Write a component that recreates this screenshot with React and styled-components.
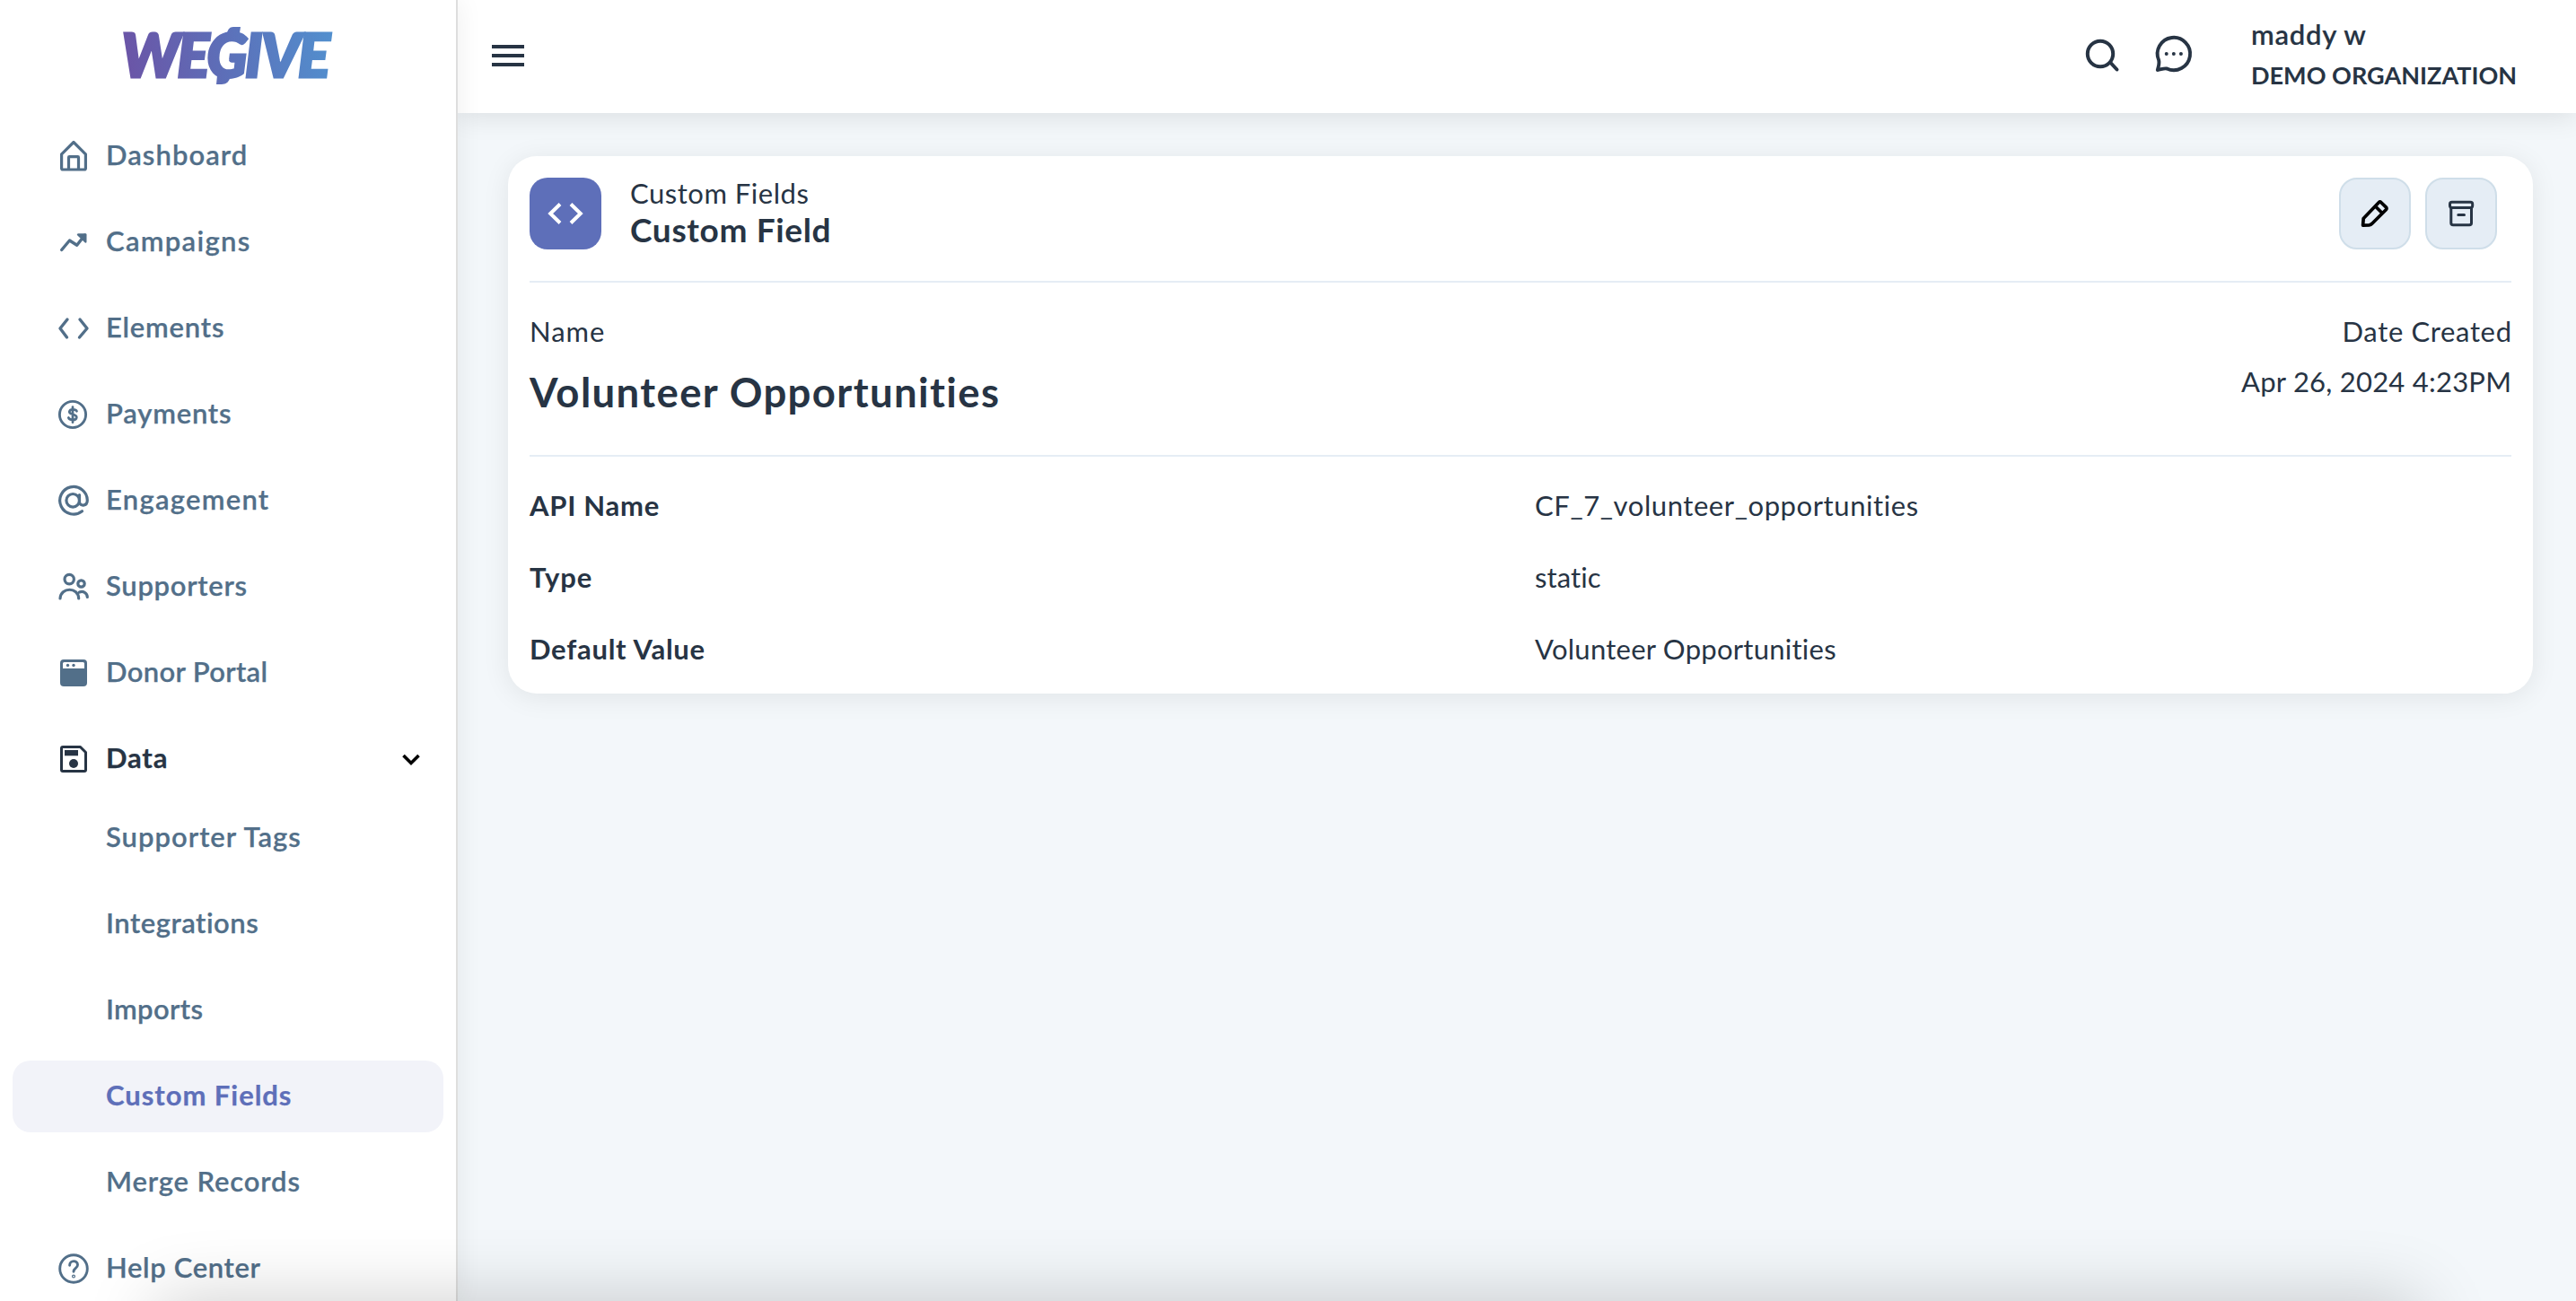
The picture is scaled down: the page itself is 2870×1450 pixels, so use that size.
import React from "react";
import styled, { createGlobalStyle } from "styled-components";

const ink = "#273444";
const slate = "#526f89";
const indigo = "#5e6fb9";
const line = "#e5edf5";

const GlobalStyle = createGlobalStyle`
  * { box-sizing: border-box; }
  body {
    margin: 0;
    font-family: Lato, "Open Sans", sans-serif;
    font-variant-ligatures: none;
    color: ${ink};
  }
`;

const Page = styled.div`
  position: relative;
  display: flex;
  width: 2870px;
  height: 1450px;
  overflow: hidden;
  background: #f3f7fa;
`;

const BottomShade = styled.div`
  position: absolute;
  left: 175px;
  right: 175px;
  top: 1450px;
  height: 200px;
  box-shadow: 0 0 82px rgba(0, 0, 0, 0.2);
  pointer-events: none;
  z-index: 5;
`;

const Sidebar = styled.aside`
  position: relative;
  z-index: 2;
  flex: none;
  width: 510px;
  height: 1450px;
  background: #fff;
  border-right: 2px solid #dedede;
  box-shadow: 0 0 28px rgba(0, 0, 0, 0.07);
`;

const LogoArea = styled.div`
  display: flex;
  justify-content: center;
  height: 134px;
  padding-top: 28px;
`;

const LogoText = styled.text`
  font-family: Lato, sans-serif;
  font-size: 66.5px;
  font-weight: 900;
  font-style: italic;
`;

const Nav = styled.nav`
  display: flex;
  flex-direction: column;
  gap: 16px;
  padding: 0 14px;
`;

const NavItem = styled.a`
  display: flex;
  align-items: center;
  gap: 18px;
  flex: none;
  height: 80px;
  margin-bottom: ${(p) => (p.$open ? "-8px" : "0")};
  padding: 0 22px 0 ${(p) => (p.$sub ? "104px" : "50px")};
  border-radius: 20px;
  background: ${(p) => (p.$active ? "#f2f3f9" : "transparent")};
  color: ${(p) => (p.$active ? indigo : p.$open ? ink : slate)};
  font-weight: ${(p) => (p.$active || p.$open ? 700 : 600)};
  -webkit-text-stroke: 0.25px currentColor;
`;

const NavLabel = styled.span`
  flex: 1;
  padding-bottom: 4px;
  font-size: 31px;
  line-height: 36px;
  letter-spacing: ${(p) => p.$track}px;
  white-space: nowrap;
`;

const Glyph = styled.svg`
  display: block;
  flex: none;
  overflow: visible;
  fill: none;
  stroke: currentColor;
  stroke-linecap: round;
  stroke-linejoin: round;
`;

const Main = styled.div`
  display: flex;
  flex-direction: column;
  flex: 1;
`;

const Header = styled.header`
  display: flex;
  align-items: flex-start;
  height: 126px;
  padding: 0 67px 0 38px;
  background: #fff;
  box-shadow: 0 4px 28px rgba(0, 0, 0, 0.1);
`;

const MenuButton = styled.div`
  display: flex;
  flex-direction: column;
  gap: 6px;
  width: 36px;
  margin: 50px auto 0 0;
`;

const MenuBar = styled.span`
  height: 4px;
  background: ${ink};
`;

const HeaderIcons = styled.div`
  display: flex;
  gap: 35px;
  padding: 38px 64px 0 0;
`;

const User = styled.div`
  display: flex;
  flex-direction: column;
  gap: 10px;
  width: 295px;
  padding-top: 20px;
`;

const UserName = styled.span`
  font-size: 31px;
  line-height: 36px;
  font-weight: 600;
  letter-spacing: 0.75px;
  -webkit-text-stroke: 0.15px currentColor;
`;

const Organization = styled.span`
  font-size: 27px;
  line-height: 36px;
  font-weight: 700;
  letter-spacing: 0.02px;
  white-space: nowrap;
`;

const Card = styled.section`
  margin: 48px 48px 0 56px;
  height: 599px;
  padding: 24px 24px 0;
  border-radius: 32px;
  background: #fff;
  box-shadow: 0 4px 30px rgba(0, 0, 0, 0.08);
`;

const CardHeader = styled.div`
  display: flex;
  align-items: flex-start;
  height: 117px;
  border-bottom: 2px solid ${line};
`;

const IconTile = styled.div`
  display: grid;
  place-items: center;
  width: 80px;
  height: 80px;
  border-radius: 20px;
  background: ${indigo};
  color: #fff;
`;

const Titles = styled.div`
  display: flex;
  flex-direction: column;
  gap: 3px;
  flex: 1;
  padding: 1px 0 0 32px;
`;

const Crumb = styled.span`
  font-size: 31px;
  line-height: 32px;
  letter-spacing: 0.52px;
`;

const CardTitle = styled.span`
  font-size: 37px;
  line-height: 44px;
  font-weight: 700;
  letter-spacing: 0.65px;
`;

const Actions = styled.div`
  display: flex;
  gap: 16px;
  padding-right: 16px;
`;

const ActionButton = styled.button`
  display: grid;
  place-items: center;
  width: 80px;
  height: 80px;
  padding: 0;
  border: 2px solid #cfdee9;
  border-radius: 20px;
  background: ${line};
  color: ${(p) => p.$color};
`;

const Summary = styled.div`
  display: flex;
  justify-content: space-between;
  height: 194px;
  padding-top: 30px;
  border-bottom: 2px solid ${line};
`;

const SummaryColumn = styled.div`
  display: flex;
  flex-direction: column;
  gap: ${(p) => p.$gap};
  align-items: ${(p) => (p.$end ? "flex-end" : "flex-start")};
`;

const Text = styled.span`
  font-size: 31px;
  line-height: 48px;
  font-weight: ${(p) => (p.$bold ? 700 : 400)};
  letter-spacing: ${(p) => p.$track}px;
  margin-right: ${(p) => (p.$end ? `${-p.$track}px` : "0")};
  white-space: nowrap;
`;

const FieldName = styled.h1`
  margin: 0;
  font-size: 45.5px;
  line-height: 60px;
  font-weight: 700;
  letter-spacing: 1.38px;
`;

const Fields = styled.div`
  display: grid;
  grid-template-columns: 1fr 1fr;
  gap: 32px;
  padding-top: 30px;
`;

const Logo = () => (
  <Glyph width="236" height="68" viewBox="136 28 236 68">
    <defs>
      <linearGradient id="brand" gradientUnits="userSpaceOnUse" x1="137" y1="75" x2="371" y2="50">
        <stop offset="0" stopColor="#6b54a6" />
        <stop offset="0.5" stopColor="#5c70b9" />
        <stop offset="1" stopColor="#528fce" />
      </linearGradient>
    </defs>
    <g fill="url(#brand)" stroke="url(#brand)">
      <LogoText x="135.5 197.5 230.5 273 291 332" y="85.6" strokeWidth="3.2" strokeLinejoin="miter">WEGIVE</LogoText>
      <path stroke="none" d="M252 40C253.5 32.500 256 30 260 30H268L266.500 40ZM242 84L241 94H247C253 94 255.500 91 257 84Z" />
    </g>
  </Glyph>
);

const icons = {
  home: (
    <g strokeWidth="3.2">
      <path d="M18 2.500 4.600 15.800V31.500Q4.600 33 6 33H30Q31.400 33 31.400 31.500V15.800Z" />
      <path d="M12.500 32V19.500Q12.500 18.700 13.300 18.700H22.700Q23.500 18.700 23.500 19.500V32" />
    </g>
  ),
  trend: (
    <g strokeWidth="3.400">
      <path d="M4.700 26.500 13.500 16 21.700 21.200 30.500 10" />
      <path d="M23 9.500H31.300V17.500Z" fill="currentColor" strokeWidth="2.400" />
    </g>
  ),
  code: <path strokeWidth="3.400" d="M11 8 3 18 10.500 28M25 8 33 18 24.500 28" />,
  dollar: (
    <g strokeWidth="2.900">
      <circle cx="17" cy="18" r="14.600" />
      <path d="M21.500 14.300C20.500 12 14 11.500 13.300 14.800 12.700 18.600 21.700 17 21.300 21.200 20.800 25 13.300 24.500 12.300 21.500M17 9.500V26.700" strokeWidth="2.700" />
    </g>
  ),
  at: (
    <g strokeWidth="3.200">
      <circle cx="17.200" cy="17.800" r="7.300" />
      <path d="M24.500 11.500V19.500C24.500 24.500 33.300 24.700 33.300 17.500A15.300 15.300 0 1 0 27.500 29.800" />
    </g>
  ),
  people: (
    <g strokeWidth="3.200">
      <circle cx="13.200" cy="9.600" r="5.200" />
      <circle cx="26.500" cy="14.500" r="3.700" />
      <path d="M3 31C3.500 18 23.500 18 23.700 31M24.500 24C28.500 22.500 33.200 24.500 33.300 29.500" />
    </g>
  ),
  portal: (
    <g stroke="none" fill="currentColor">
      <path fillRule="evenodd" d="M7 3H29Q33 3 33 7V29Q33 33 29 33H7Q3 33 3 29V7Q3 3 7 3ZM7.500 6Q6 6 6 7.500V13H30V7.500Q30 6 28.500 6Z" />
      <circle cx="11.500" cy="9.500" r="1.700" />
      <circle cx="18" cy="9.500" r="1.700" />
    </g>
  ),
  disk: (
    <g strokeWidth="3">
      <path d="M6 4.500H25.500L31.500 10.500V30Q31.500 31.500 30 31.500H6Q4.500 31.500 4.500 30V6Q4.500 4.500 6 4.500Z" />
      <path d="M8 8H23V14.300H8Z" fill="currentColor" stroke="none" />
      <circle cx="18" cy="23" r="5" fill="currentColor" stroke="none" />
    </g>
  ),
  help: (
    <g strokeWidth="2.900">
      <circle cx="18" cy="18" r="15.300" />
      <path d="M13.600 14.200C13.600 8 22.500 8.300 22.500 13.800 22.500 17.500 18 17.300 18 21.300" />
      <circle cx="18" cy="26.500" r="0.600" />
    </g>
  ),
};

const items = [
  { label: "Dashboard", icon: "home", track: 1.05 },
  { label: "Campaigns", icon: "trend", track: 1.3 },
  { label: "Elements", icon: "code", track: 0.78 },
  { label: "Payments", icon: "dollar", track: 0.78 },
  { label: "Engagement", icon: "at", track: 1.25 },
  { label: "Supporters", icon: "people", track: 0.7 },
  { label: "Donor Portal", icon: "portal", track: 0.33 },
  { label: "Data", icon: "disk", track: 0.8, open: true },
  { label: "Supporter Tags", track: 1 },
  { label: "Integrations", track: 0.52 },
  { label: "Imports", track: 0.33 },
  { label: "Custom Fields", track: 0.96, active: true },
  { label: "Merge Records", track: 0.85 },
  { label: "Help Center", icon: "help", track: 0.65 },
];

const fields = [
  ["API Name", 0.72, "CF_7_volunteer_opportunities", 0.58],
  ["Type", 0.95, "static", 0.08],
  ["Default Value", 0.74, "Volunteer Opportunities", 0.26],
];

export default function App() {
  return (
    <Page>
      <GlobalStyle />
      <Sidebar>
        <LogoArea>
          <Logo />
        </LogoArea>
        <Nav>
          {items.map((item) => (
            <NavItem key={item.label} $sub={!item.icon} $open={item.open} $active={item.active}>
              {item.icon && (
                <Glyph width="36" height="36" viewBox="0 0 36 36">
                  {icons[item.icon]}
                </Glyph>
              )}
              <NavLabel $track={item.track}>{item.label}</NavLabel>
              {item.open && (
                <Glyph width="28" height="28" viewBox="0 0 28 28">
                  <path d="M5.500 10 14 18.500 22.500 10" stroke="#000" strokeWidth="3.600" strokeLinecap="butt" strokeLinejoin="miter" />
                </Glyph>
              )}
            </NavItem>
          ))}
        </Nav>
      </Sidebar>

      <Main>
        <Header>
          <MenuButton>
            <MenuBar />
            <MenuBar />
            <MenuBar />
          </MenuButton>
          <HeaderIcons>
            <Glyph width="44" height="44" viewBox="0 0 44 44">
              <path strokeWidth="4" d="M37.500 39.500 31 32.500" />
              <circle cx="19" cy="22" r="14.200" strokeWidth="4" />
            </Glyph>
            <Glyph width="44" height="44" viewBox="0 0 44 44">
              <path strokeWidth="3.900" d="M3.800 40C5 36 6 32.500 5.200 29.300A18.200 18.200 0 1 1 14.200 38.500C11 37.800 7.500 39.500 3.800 40Z" />
              <path strokeWidth="4" d="M13.700 22H13.710M21.800 22H21.810M29.900 22H29.910" />
            </Glyph>
          </HeaderIcons>
          <User>
            <UserName>maddy w</UserName>
            <Organization>DEMO ORGANIZATION</Organization>
          </User>
        </Header>

        <Card>
          <CardHeader>
            <IconTile>
              <Glyph width="40" height="40" viewBox="0 0 40 40">
                <path strokeWidth="4" strokeLinecap="butt" strokeLinejoin="miter" d="M14 9.500 3.200 20 14 30.500M26 9.500 36.800 20 26 30.500" />
              </Glyph>
            </IconTile>
            <Titles>
              <Crumb>Custom Fields</Crumb>
              <CardTitle>Custom Field</CardTitle>
            </Titles>
            <Actions>
              <ActionButton $color="#000">
                <Glyph width="36" height="36" viewBox="0 0 36 36">
                  <path strokeWidth="3.700" d="M4.600 31.200 5.200 23.500 22.200 5.700Q23.600 4.300 25 5.700L30.300 10.900Q31.700 12.300 30.300 13.700L15 29Q13.500 30.600 11.500 30.800ZM18.500 10 25.800 17.200" />
                </Glyph>
              </ActionButton>
              <ActionButton $color={ink}>
                <Glyph width="36" height="36" viewBox="0 0 36 36">
                  <g strokeWidth="3">
                    <rect x="5.500" y="5.200" width="25.200" height="6.200" rx="2.200" />
                    <path d="M6.800 11.400V28.500Q6.800 30.800 9.100 30.800H27.200Q29.500 30.800 29.500 28.500V11.400M14.800 19.500H21.500" />
                  </g>
                </Glyph>
              </ActionButton>
            </Actions>
          </CardHeader>

          <Summary>
            <SummaryColumn $gap="14px">
              <Text $track={1}>Name</Text>
              <FieldName>Volunteer Opportunities</FieldName>
            </SummaryColumn>
            <SummaryColumn $gap="8px" $end>
              <Text $track={0.65} $end>Date Created</Text>
              <Text $track={0.23} $end>Apr 26, 2024 4:23PM</Text>
            </SummaryColumn>
          </Summary>

          <Fields>
            {fields.map(([name, nameTrack, value, valueTrack]) => (
              <React.Fragment key={name}>
                <Text $bold $track={nameTrack}>{name}</Text>
                <Text $track={valueTrack}>{value}</Text>
              </React.Fragment>
            ))}
          </Fields>
        </Card>
      </Main>
      <BottomShade />
    </Page>
  );
}
